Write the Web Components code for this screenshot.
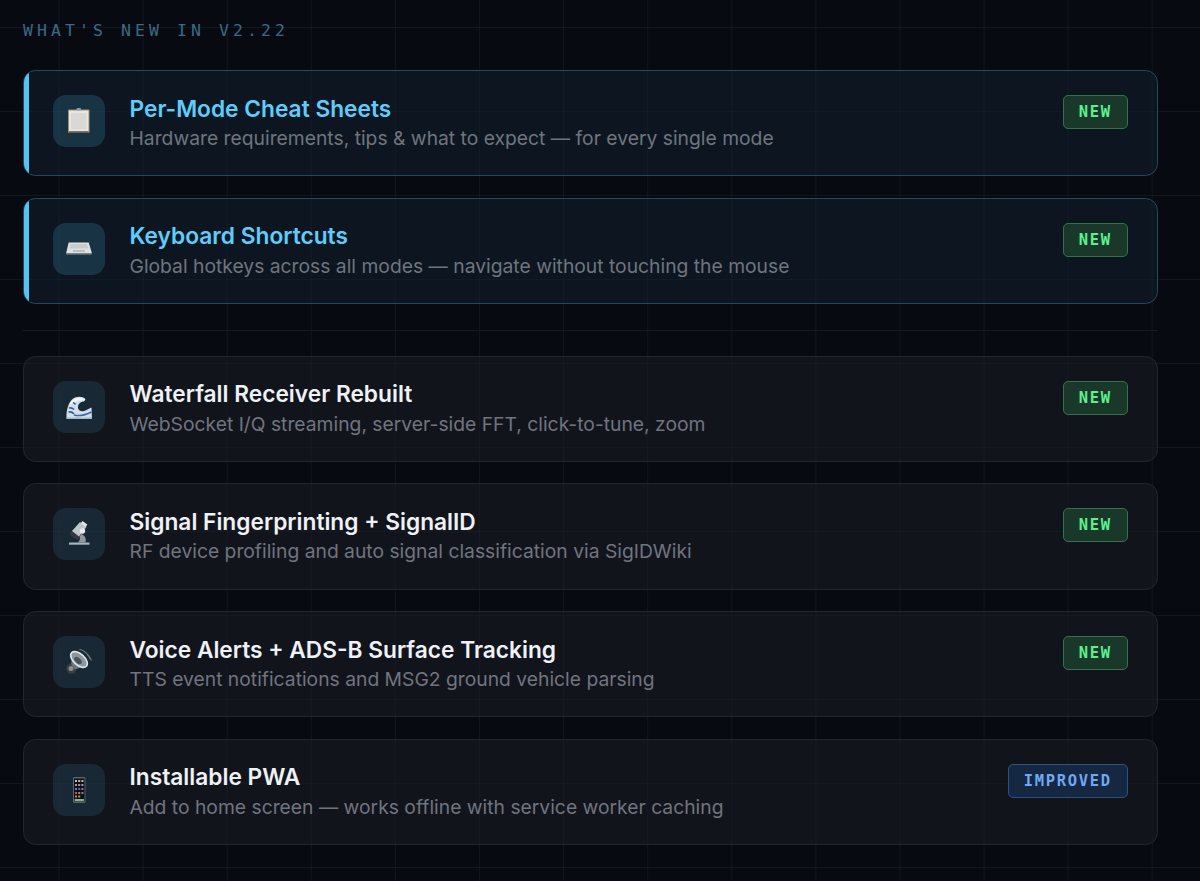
<!DOCTYPE html>
<html>
<head>
<meta charset="utf-8">
<title>What's new</title>
<style>
    html, body { margin: 0; height: 881px; overflow: hidden; background: #07090f; }
</style>
</head>
<body>
<whats-new heading="What's new in v2.22">
    <feature-card accent badge="new" heading="Per-Mode Cheat Sheets" text="Hardware requirements, tips &amp; what to expect — for every single mode">
        <svg viewBox="0 0 26 26" width="26" height="26">
            <rect x="2" y="1.500" width="21.500" height="23.500" rx="1" fill="#a58a68"/>
            <rect x="3" y="2.500" width="19.500" height="20.800" fill="#e6e6e4"/>
            <rect x="5" y="5" width="15.500" height="16.500" fill="#d8d8d6"/>
            <rect x="3" y="23.300" width="19.500" height="1.700" fill="#6f5c44"/>
            <rect x="10.500" y="0" width="4.500" height="2.600" rx="1" fill="#8d9aa3"/>
        </svg>
    </feature-card>
    <feature-card accent badge="new" heading="Keyboard Shortcuts" text="Global hotkeys across all modes — navigate without touching the mouse">
        <svg viewBox="0 0 26 26" width="26" height="26">
            <path d="M2.700 6.500h20L26 17.500H0z" fill="#dfe1e1"/>
            <path d="M4.500 8h16.500l1.500 4.500H3.200z" fill="#c9cccd"/>
            <path d="M0 17.500h26l-.4 1.300H.4z" fill="#6b7175"/>
            <rect x="7" y="14.200" width="12" height="1.500" fill="#aeb3b5"/>
        </svg>
    </feature-card>
    <section-rule></section-rule>
    <feature-card badge="new" heading="Waterfall Receiver Rebuilt" text="WebSocket I/Q streaming, server-side FFT, click-to-tune, zoom">
        <svg viewBox="0 0 26 26" width="26" height="26">
            <path d="M0.500 25C0 15 3 6 9 3.500c4-1.500 8-.8 10.500 1.500l-1.500 2.500c-3.500 0-6 2.500-6 6 0 3 4 5 8 2.800 2-1 4-2.300 5.500-2.800L26 25z" fill="#d3deE8"/>
            <path d="M3 11c2-4 5-6.500 8-7 3-.4 6 .2 8 1.500l-1 1.500c-2-.8-3 0-3-.5-3-.5-6 1-7 3.500-2-.5-3.500 0-5 1z" fill="#f3f6f8"/>
            <path d="M3 14c2-.5 3.500 0 5 1.500M2.500 18c2-.5 4 .2 5.500 2M7 8.500c1 .5 2 1 2.500 2" fill="none" stroke="#2f5f9e" stroke-width="1.600"/>
            <path d="M8 21c4 1 9 1.500 17.500-3" fill="none" stroke="#3a6aa8" stroke-width="1.500"/>
            <path d="M1 25h25v-2c-3 .7-5 .2-7 .5-3 .7-5-.5-8-.2s-6 .5-10 .2z" fill="#9dbad2"/>
        </svg>
    </feature-card>
    <feature-card badge="new" heading="Signal Fingerprinting + SignalID" text="RF device profiling and auto signal classification via SigIDWiki">
        <svg viewBox="0 0 26 26" width="26" height="26">
            <rect x="3" y="21.500" width="20.500" height="2.200" fill="#aab4ba"/>
            <path d="M15.500 13c3.500 1.500 5 4.500 4 8.500h-8c2-1 3-3.500 2-6z" fill="#8d999f"/>
            <path d="M3.500 12.500l3-3 7.500 6.500-2 2.500c-3-.2-6.500-2.500-8.500-6z" fill="#35373c"/>
            <path d="M6 10l8-9 6.500 5-7.500 9.500z" fill="#bcc6cb"/>
            <path d="M16.500 0l4.800 3.500-1.500 2.500-5-3.800z" fill="#e0e5e8"/>
            <circle cx="16.500" cy="10" r="2.700" fill="#e8ecee"/>
        </svg>
    </feature-card>
    <feature-card badge="new" heading="Voice Alerts + ADS-B Surface Tracking" text="TTS event notifications and MSG2 ground vehicle parsing">
        <svg viewBox="0 0 26 26" width="26" height="26">
            <circle cx="5.500" cy="19.500" r="5.200" fill="#3b3d41"/>
            <circle cx="5" cy="19.500" r="2.500" fill="#8a8d91"/>
            <path d="M7 4.500L18.500 17 9 20.500 5 15z" fill="#6d7780"/>
            <ellipse cx="13" cy="10.500" rx="10" ry="5.600" transform="rotate(42 13 10.500)" fill="#8b98a2" stroke="#dfe3e5" stroke-width="1.600"/>
            <ellipse cx="12" cy="11.500" rx="4.500" ry="2.600" transform="rotate(42 12 11.500)" fill="#4a525a"/>
            <path d="M13 0c5 1.500 10 6 12.500 11.500M21 5c1.500 1.500 2.500 3.500 3 5" fill="none" stroke="#64737d" stroke-width="1.300"/>
        </svg>
    </feature-card>
    <feature-card badge="improved" heading="Installable PWA" text="Add to home screen — works offline with service worker caching">
        <svg viewBox="0 0 26 26" width="26" height="26">
            <rect x="7" y="0" width="12.500" height="26" rx="1.500" fill="#5b6268"/>
            <rect x="8" y="1.500" width="10.500" height="23" fill="#0f1116"/>
            <g fill="#c9b9a0"><rect x="9" y="3" width="2" height="2"/><rect x="12.200" y="3" width="2" height="2"/><rect x="15.400" y="3" width="2" height="2"/></g>
            <g fill="#8ea0b8"><rect x="9" y="7" width="2" height="2"/><rect x="12.200" y="7" width="2" height="2"/><rect x="15.400" y="7" width="2" height="2"/></g>
            <g fill="#9b6f8d"><rect x="9" y="11" width="2" height="2"/><rect x="12.200" y="11" width="2" height="2" fill="#5a69b0"/><rect x="15.400" y="11" width="2" height="2"/></g>
            <g fill="#b5604f"><rect x="9" y="15" width="2" height="2"/><rect x="12.200" y="15" width="2" height="2" fill="#a08f4f"/><rect x="15.400" y="15" width="2" height="2" fill="#708bb0"/></g>
            <g fill="#c77e6d"><rect x="9" y="18.500" width="2" height="2"/><rect x="12.200" y="18.500" width="2" height="2"/></g>
            <rect x="8.600" y="22" width="9.300" height="2.200" fill="#7fb59a"/>
        </svg>
    </feature-card>
</whats-new>

<script>
// outer panel, holds the grid background and the heading
class WhatsNew extends HTMLElement {
    constructor() {
        super();
        this.attachShadow({ mode: "open" });
        this.shadowRoot.innerHTML = `
<style>
    :host {
        display: block;
        box-sizing: border-box;
        width: 1200px;
        height: 881px;
        padding: 20px 42px 0 23px;
        background-color: #080a11;
        background-image:
            linear-gradient(rgba(130,175,205,.07) 1px, transparent 1px),
            linear-gradient(90deg, rgba(130,175,205,.07) 1px, transparent 1px);
        background-size: 84.1px 84px;
        background-position: 58.5px 27px;
        font-family: Inter, "Noto Sans", sans-serif;
    }
    h2 {
        margin: 0 0 29px;
        font: 400 16.5px/21px "DejaVu Sans Mono", monospace;
        letter-spacing: 4.07px;
        text-transform: uppercase;
        color: #3a6a85;
    }
    .list {
        display: flex;
        flex-direction: column;
        gap: 21.4px;
    }
</style>
<h2></h2>
<div class="list"><slot></slot></div>
`;
    }

    connectedCallback() {
        this.shadowRoot.querySelector("h2").textContent = this.getAttribute("heading");
    }
}

// thin divider between the highlighted cards and the rest
class SectionRule extends HTMLElement {
    constructor() {
        super();
        this.attachShadow({ mode: "open" });
        this.shadowRoot.innerHTML = `
<style>
    :host {
        display: block;
        height: 1px;
        margin: 4.500px 0 3.500px;
        background: #171b21;
    }
</style>
`;
    }
}

class FeatureCard extends HTMLElement {
    constructor() {
        super();
        this.attachShadow({ mode: "open" });
        this.shadowRoot.innerHTML = `
<style>
    :host {
        display: flex;
        position: relative;
        overflow: hidden;
        align-items: flex-start;
        box-sizing: border-box;
        height: 106.300px;
        padding: 24px 29px 0 29px;
        border: 1.300px solid #22272e;
        border-radius: 12.500px;
        background: rgba(24,27,35,.62);
    }
    :host([accent]) {
        border-color: #25495c;
        background: rgba(18,32,46,.55);
    }
    /* accent bar sits over the card edge, clipped by the radius */
    :host([accent])::before {
        content: "";
        position: absolute;
        left: 0;
        top: 0;
        bottom: 0;
        width: 5.200px;
        background: #53c5f5;
    }
    .icon {
        flex: none;
        display: flex;
        align-items: center;
        justify-content: center;
        width: 52px;
        height: 52px;
        border-radius: 13px;
        background: rgba(64,160,200,.14);
    }
    :host([accent]) .icon { background: rgba(70,175,215,.2); }
    .body {
        flex: 1;
        min-width: 0;
        margin-left: 24.500px;
        margin-top: -1.500px;
    }
    .title {
        font-size: 22.730px;
        font-weight: 600;
        line-height: 29.500px;
        color: #eef1f5;
    }
    :host([accent]) .title { color: #5fcdfb; }
    .text {
        font-size: 19.300px;
        line-height: 30px;
        color: #6f757f;
    }
    status-badge { flex: none; }
</style>
<div class="icon"><slot></slot></div>
<div class="body">
    <div class="title"></div>
    <div class="text"></div>
</div>
<status-badge></status-badge>
`;
    }

    connectedCallback() {
        this.shadowRoot.querySelector(".title").textContent = this.getAttribute("heading");
        this.shadowRoot.querySelector(".text").textContent = this.getAttribute("text");
        this.shadowRoot.querySelector("status-badge").setAttribute("kind", this.getAttribute("badge"));
    }
}

class StatusBadge extends HTMLElement {
    constructor() {
        super();
        this.attachShadow({ mode: "open" });
        this.shadowRoot.innerHTML = `
<style>
    :host {
        display: block;
        box-sizing: border-box;
        height: 34px;
        padding: 0 15.200px;
        border: 1.300px solid #33724f;
        border-radius: 5px;
        background: #1a3829;
        color: #5cf08f;
        font: 700 15.500px/33.500px "DejaVu Sans Mono", monospace;
        letter-spacing: 1.670px;
    }
    :host([kind="improved"]) {
        border-color: #2a5285;
        background: #162742;
        color: #70a8f5;
    }
</style>
<span></span>
`;
    }

    static get observedAttributes() {
        return ["kind"];
    }

    attributeChangedCallback(attributeName, oldVal, newVal) {
        this.shadowRoot.querySelector("span").textContent = newVal.toUpperCase();
    }
}

customElements.define("status-badge", StatusBadge);
customElements.define("section-rule", SectionRule);
customElements.define("feature-card", FeatureCard);
customElements.define("whats-new", WhatsNew);
</script>
</body>
</html>
